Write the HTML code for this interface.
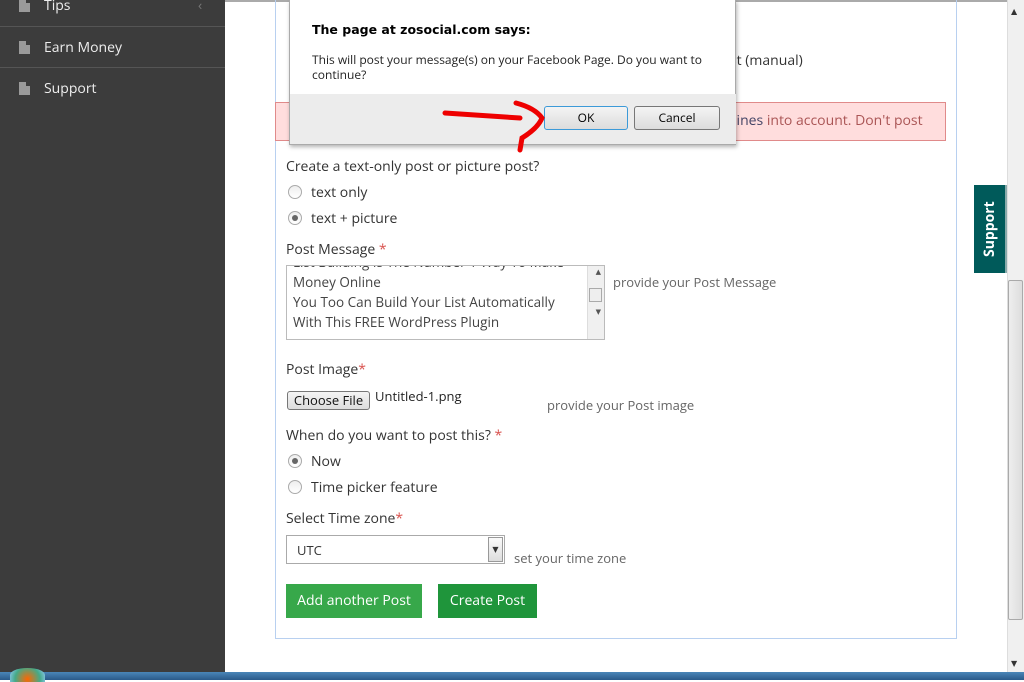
<!DOCTYPE html>
<html><head><meta charset="utf-8"><style>
*{margin:0;padding:0;box-sizing:border-box}
body{width:1024px;height:680px;overflow:hidden;position:relative;background:#fff;font-family:"Open Sans","DejaVu Sans","Liberation Sans",sans-serif;color:#333;font-size:14px}
.abs{position:absolute}
.side{left:0;top:0;width:225px;height:672px;background:#3c3c3c}
.side .item{position:absolute;left:0;width:225px;color:#eee;font-size:14px;padding-left:44px}
.side .ic{position:absolute;left:19px;width:11px;height:13px;background:#9a9a9a}
.side .ic:after{content:"";position:absolute;right:0;top:0;border-left:4px solid #3c3c3c;border-bottom:4px solid #3c3c3c;width:0;height:0}
.hl{height:1px;background:#555;left:0;width:225px}
.t{position:absolute;white-space:nowrap}
.radio{position:absolute;width:14px;height:14px;border:1px solid #aaa;border-radius:50%;background:linear-gradient(#eee,#fff)}
.radio.on:after{content:"";position:absolute;left:3px;top:3px;width:6px;height:6px;border-radius:50%;background:#666}
.star{color:#d9534f}
.hint{color:#666;font-size:13px}
.btn{position:absolute;color:#fff;font-size:14px;text-align:center;line-height:34px;height:34px}
</style></head><body>
<div class="abs side">
 <div class="item" style="top:-4px"><span class="ic" style="top:3px"></span>Tips<span style="position:absolute;left:198px;color:#777">‹</span></div>
 <div class="abs hl" style="top:26px"></div>
 <div class="item" style="top:38px"><span class="ic" style="top:3px"></span>Earn Money</div>
 <div class="abs hl" style="top:67px"></div>
 <div class="item" style="top:79px"><span class="ic" style="top:3px"></span>Support</div>
</div>
<div class="abs" style="left:225px;top:0;width:782px;height:2px;background:#aaa"></div>
<div class="abs" style="left:275px;top:0;width:682px;height:639px;border:1px solid #b8d0f0;border-top:none"></div>
<div class="t" style="left:730px;top:51px;font-size:14px">st (manual)</div>
<div class="abs" style="left:275px;top:102px;width:671px;height:39px;background:#fdd;border:1px solid #e08a8a"></div>
<div class="t" style="left:733px;top:111px;color:#a55;font-size:14px"><span style="color:#446">lines</span> into account. Don't post</div>
<div class="t" style="left:286px;top:157px">Create a text-only post or picture post?</div>
<div class="radio" style="left:288px;top:185px"></div><div class="t" style="left:311px;top:183px">text only</div>
<div class="radio on" style="left:288px;top:211px"></div><div class="t" style="left:311px;top:209px">text + picture</div>
<div class="t" style="left:286px;top:240px">Post Message <span class="star">*</span></div>
<div class="abs" style="left:286px;top:265px;width:319px;height:75px;border:1px solid #bbb;overflow:hidden">
 <div class="t" style="left:6px;top:-14px;line-height:20px;font-size:13.5px;color:#444">List Building Is The Number 1 Way To Make<br>Money Online<br>You Too Can Build Your List Automatically<br>With This FREE WordPress Plugin</div>
 <div class="abs" style="right:0;top:0;width:17px;height:73px;background:#f0f0f0;border-left:1px solid #ddd"></div>
 <div class="abs" style="right:3px;top:2px;font-size:7px;color:#555">▲</div>
 <div class="abs" style="right:2px;top:22px;width:13px;height:14px;background:#eee;border:1px solid #aaa"></div>
 <div class="abs" style="right:3px;top:42px;font-size:7px;color:#555">▼</div>
</div>
<div class="t hint" style="left:613px;top:273px">provide your Post Message</div>
<div class="t" style="left:286px;top:360px">Post Image<span class="star">*</span></div>
<div class="abs" style="left:287px;top:391px;width:83px;height:19px;border:1px solid #777;border-radius:3px;background:linear-gradient(#f4f4f4,#ddd);font-size:13px;text-align:center;line-height:17px;color:#111">Choose File</div>
<div class="t" style="left:375px;top:387px;font-size:13px;color:#222">Untitled-1.png</div>
<div class="t hint" style="left:547px;top:396px">provide your Post image</div>
<div class="t" style="left:286px;top:426px">When do you want to post this? <span class="star">*</span></div>
<div class="radio on" style="left:288px;top:454px"></div><div class="t" style="left:311px;top:452px">Now</div>
<div class="radio" style="left:288px;top:480px"></div><div class="t" style="left:311px;top:478px">Time picker feature</div>
<div class="t" style="left:286px;top:509px">Select Time zone<span class="star">*</span></div>
<div class="abs" style="left:286px;top:535px;width:219px;height:29px;border:1px solid #aaa"><span class="t" style="left:10px;top:5px;font-size:13px">UTC</span><div class="abs" style="right:1px;top:1px;width:15px;height:25px;background:linear-gradient(#fafafa,#ddd);border:1px solid #999;font-size:8px;text-align:center;line-height:23px">▼</div></div>
<div class="t hint" style="left:514px;top:549px">set your time zone</div>
<div class="btn" style="left:286px;top:584px;width:136px;background:#37a84a">Add another Post</div>
<div class="btn" style="left:438px;top:584px;width:99px;background:#1f953b">Create Post</div>
<div class="abs" style="left:974px;top:185px;width:33px;height:88px;background:#005a5a;border-left:2px solid #8aa;color:#fff;font-weight:bold;font-size:14px;writing-mode:vertical-rl;transform:rotate(180deg);text-align:center;line-height:31px">Support</div>
<div class="abs" style="left:1007px;top:0;width:17px;height:672px;background:#f0f0f0;border-left:1px solid #ddd"></div>
<div class="t" style="left:1011px;top:6px;font-size:8px;color:#333">▲</div>
<div class="abs" style="left:1008px;top:280px;width:15px;height:340px;background:linear-gradient(90deg,#eee,#ddd);border:1px solid #aaa;border-radius:2px"></div>
<div class="t" style="left:1011px;top:658px;font-size:8px;color:#333">▼</div>
<div class="abs" style="left:289px;top:0;width:447px;height:145px;background:#fff;border:1px solid #aaa;border-top:none;box-shadow:1px 2px 4px rgba(0,0,0,.3)">
 <div class="t" style="left:22px;top:22px;font-family:'DejaVu Sans','Liberation Sans',sans-serif;font-weight:bold;font-size:12.5px;color:#000">The page at zosocial.com says:</div>
 <div class="t" style="left:22px;top:52px;font-size:12px;color:#222;line-height:15px;white-space:normal;width:400px">This will post your message(s) on your Facebook Page. Do you want to continue?</div>
 <div class="abs" style="left:0;top:94px;width:446px;height:50px;background:#ececec"></div>
 <div class="abs" style="left:254px;top:106px;width:84px;height:24px;border:1px solid #3c9ad8;border-radius:3px;background:linear-gradient(#f4f4f4,#dcdcdc);text-align:center;line-height:22px;font-size:12px;color:#000">OK</div>
 <div class="abs" style="left:344px;top:106px;width:86px;height:24px;border:1px solid #777;border-radius:3px;background:linear-gradient(#f4f4f4,#dcdcdc);text-align:center;line-height:22px;font-size:12px;color:#000">Cancel</div>
</div>
<svg class="abs" style="left:440px;top:98px" width="110" height="55"><path d="M5 15 L80 20 M76 5 Q95 10 102 20 Q98 30 82 40 L80 52" stroke="#e00" stroke-width="5" fill="none" stroke-linecap="round"/></svg>
<div class="abs" style="left:0;top:672px;width:1024px;height:8px;background:linear-gradient(#4a86b8,#2a5a8a)"></div>
<div class="abs" style="left:10px;top:668px;width:35px;height:14px;border-radius:50% 50% 0 0;background:radial-gradient(circle at 50% 80%,#f60,#4a8 60%,#9cf)"></div>
</body></html>
